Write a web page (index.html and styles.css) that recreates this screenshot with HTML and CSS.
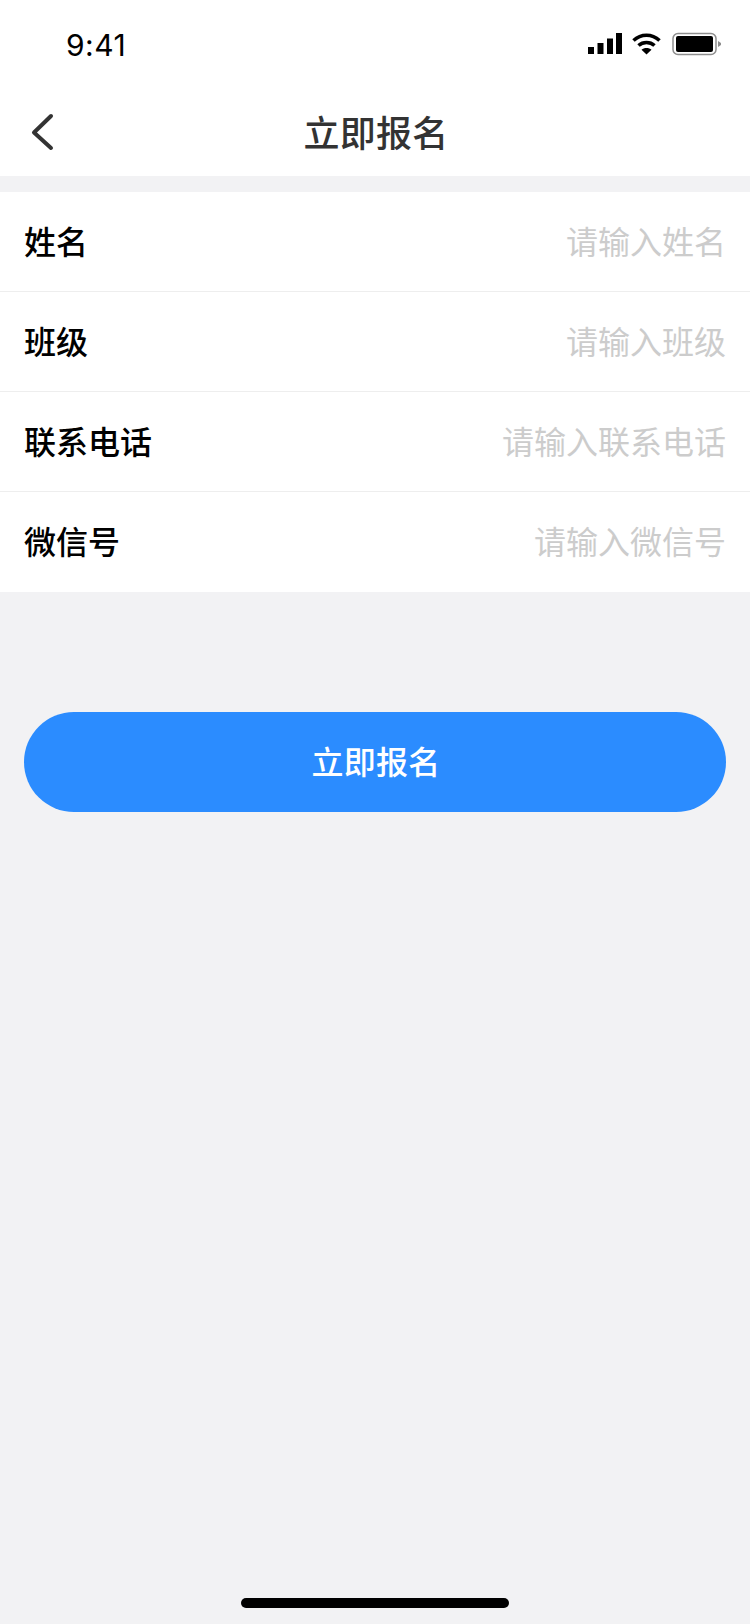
FILE: index.html
```html
<!DOCTYPE html>
<html>
<head>
  <title>立即报名</title>
  <link rel="stylesheet" href="styles.css">
</head>
<body>

  <!-- Status bar -->
  <div class="status-bar">
    <span class="time">9:41</span>
    <div class="status-icons">
      <svg class="signal" width="34" height="22" viewBox="0 0 34 22">
        <rect x="0" y="14" width="6" height="7" fill="#000"/>
        <rect x="9.500" y="10" width="6" height="11" fill="#000"/>
        <rect x="19" y="5.500" width="6" height="15.500" fill="#000"/>
        <rect x="28" y="0" width="6" height="21" fill="#000"/>
      </svg>
      <svg class="wifi" width="29" height="22" viewBox="0 0 29 22">
        <path d="M1.500 7.500C9 .5 20 .5 27.500 7.500" fill="none" stroke="#000" stroke-width="3.600"/>
        <path d="M6.500 12.500C11 8.500 18 8.500 22.500 12.500" fill="none" stroke="#000" stroke-width="3.600"/>
        <path d="M14.500 21.500L9.500 16.800C12 14.500 17 14.500 19.500 16.800Z" fill="#000"/>
      </svg>
      <svg class="battery" width="49" height="24" viewBox="0 0 49 24">
        <rect x="1" y="1.500" width="43" height="21" rx="5" fill="none" stroke="#8e8e8e" stroke-width="1.500"/>
        <rect x="4" y="4" width="37" height="16" rx="2" fill="#000"/>
        <path d="M46 9L49 11V13L46 15Z" fill="#8e8e8e"/>
      </svg>
    </div>
  </div>

  <!-- Nav bar -->
  <div class="nav-bar">
    <svg class="back" width="26" height="38" viewBox="0 0 26 38">
      <path d="M22 3L5 19.500L22 35" fill="none" stroke="#333" stroke-width="4" stroke-linecap="round" stroke-linejoin="round"/>
    </svg>
    <h1 class="nav-title">立即报名</h1>
  </div>

  <!-- Form -->
  <form class="form-list">
    <div class="form-row">
      <label class="form-label">姓名</label>
      <span class="form-placeholder">请输入姓名</span>
    </div>
    <div class="form-row">
      <label class="form-label">班级</label>
      <span class="form-placeholder">请输入班级</span>
    </div>
    <div class="form-row">
      <label class="form-label">联系电话</label>
      <span class="form-placeholder">请输入联系电话</span>
    </div>
    <div class="form-row">
      <label class="form-label">微信号</label>
      <span class="form-placeholder">请输入微信号</span>
    </div>
  </form>

  <button type="button" class="submit-btn">立即报名</button>

  <div class="home-bar"></div>

</body>
</html>
```

FILE: styles.css
```css
html, body {
  margin: 0;
  padding: 0;
}
body {
  position: relative;
  width: 750px;
  height: 1624px;
  overflow: hidden;
  background-color: #f2f2f4;
  font-family: "Liberation Sans", "Noto Sans CJK SC", sans-serif;
  color: #000;
}
.status-bar {
  display: flex;
  justify-content: space-between;
  align-items: center;
  height: 88px;
  padding: 0 29px 0 66px;
  box-sizing: border-box;
  background-color: #fff;
}
.time {
  padding-top: 1px;
  font-family: Inter, "Liberation Sans", sans-serif;
  font-size: 30px;
  letter-spacing: 0.5px;
}
.status-icons {
  display: flex;
  align-items: center;
  gap: 10px;
}
.battery {
  margin-left: 1px;
}
.nav-bar {
  display: flex;
  align-items: center;
  justify-content: center;
  position: relative;
  height: 88px;
  padding-bottom: 2px;
  box-sizing: border-box;
  background-color: #fff;
}
.back {
  position: absolute;
  left: 29px;
  top: 25px;
}
.nav-title {
  margin: 0 0 0 2px;
  font-size: 36px;
  font-weight: 500;
  letter-spacing: 0.3px;
  color: #333;
}
.form-list {
  margin-top: 16px;
  background-color: #fff;
}
.form-row {
  display: flex;
  justify-content: space-between;
  align-items: center;
  height: 100px;
  padding: 0 24px 4px;
  box-sizing: border-box;
  border-bottom: 1px solid #eeeeee;
}
.form-row:last-child {
  border-bottom: none;
}
.form-label {
  font-size: 32px;
  font-weight: 500;
  color: #000;
}
.form-placeholder {
  font-size: 32px;
  color: #cccccc;
}
.submit-btn {
  display: block;
  width: 702px;
  height: 100px;
  margin: 120px 0 0 24px;
  padding: 0 0 4px 2px;
  border: none;
  border-radius: 50px;
  background-color: #2b8cff;
  color: #fff;
  font-family: inherit;
  font-size: 32px;
  font-weight: 500;
  letter-spacing: 0.3px;
}
.home-bar {
  position: absolute;
  left: 241px;
  top: 1598px;
  width: 268px;
  height: 10px;
  border-radius: 5px;
  background-color: #000;
}
```
